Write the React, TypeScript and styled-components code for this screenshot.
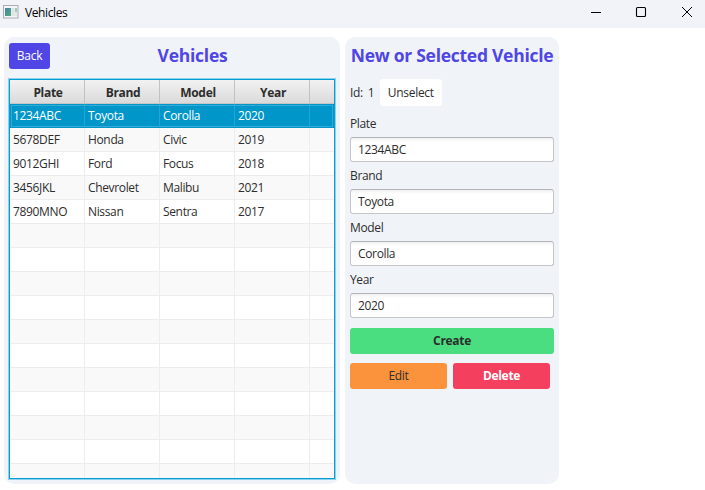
import React from "react";
import styled, { createGlobalStyle, css } from "styled-components";

const GlobalStyle = createGlobalStyle`
  * { box-sizing: border-box; }
  html, body { margin: 0; padding: 0; background: #fff; }
  body {
    font-family: "Open Sans", "Noto Sans", sans-serif;
    font-size: 12px;
    letter-spacing: -0.35px;
    color: #2d2d2d;
    overflow: hidden;
  }
  button, input { font: inherit; color: inherit; margin: 0; letter-spacing: inherit; }
`;

const Window = styled.div`
  width: 705px;
  height: 490px;
  display: flex;
  flex-direction: column;
`;

const TitleBar = styled.header`
  height: 28px;
  flex: none;
  display: flex;
  align-items: center;
  background: #f2f3f8;
  color: #000;
  padding: 0 3px;
`;

const AppIcon = styled.svg`
  display: block;
  margin-bottom: 4px;
`;

const WindowTitle = styled.span`
  flex: 1;
  margin-left: 6px;
  line-height: 16px;
  margin-bottom: 2px;
  letter-spacing: -0.4px;
`;

const Controls = styled.svg`
  display: block;
  margin-bottom: 4px;
`;

const Content = styled.main`
  height: 462px;
  display: flex;
  gap: 5px;
  padding: 9px 4px 6px;
`;

const Panel = styled.section<{ $width: number }>`
  width: ${(p) => p.$width}px;
  background: #f0f4f9;
  border-radius: 10px;
  padding: 5px;
  display: flex;
  flex-direction: column;
`;

const PanelHeader = styled.div`
  height: 28px;
  flex: none;
  display: flex;
  align-items: center;
`;

const Heading = styled.h1`
  flex: 1;
  margin: 0;
  font-size: 17.5px;
  line-height: 26px;
  padding-bottom: 2px;
  font-weight: 700;
  color: #4f46e5;
  text-align: center;
  white-space: nowrap;
  letter-spacing: -0.27px;
`;

const tones = {
  indigo: css`background: #4f46e5; color: #fff;`,
  plain: css`background: #fff;`,
  green: css`background: #4ade80; font-weight: 700;`,
  orange: css`background: #fb923c;`,
  rose: css`background: #f43f5e; color: #fff; font-weight: 700;`,
};

const Button = styled.button<{ $tone: keyof typeof tones; $width: number; $height?: number; $spacing?: number }>`
  border: 0;
  border-radius: 3px;
  padding: 0 0 1px;
  flex: none;
  width: ${(p) => p.$width}px;
  height: ${(p) => p.$height ?? 26}px;
  letter-spacing: ${(p) => p.$spacing ?? -0.3}px;
  ${(p) => tones[p.$tone]}
`;

const Table = styled.div`
  height: 400px;
  flex: none;
  margin-top: 9px;
  border: 1px solid #039ed3;
  box-shadow: 0 0 0 1px #8fd0ea;
  overflow: hidden;
  background: #fff;
`;

const columns = "75px 75px 75px 75px 1fr";

const HeadRow = styled.div`
  height: 24px;
  display: grid;
  grid-template-columns: ${columns};
  background: linear-gradient(#f2f2f2, #dadada);
  border-bottom: 1px solid #c6c6c6;
`;

const HeadCell = styled.div`
  font-weight: 700;
  line-height: 25px;
  text-align: center;
  padding-left: 2px;
  border-right: 1px solid #c2c2c2;
  letter-spacing: -0.3px;
  &:last-child { border-right: 0; }
`;

const Row = styled.div<{ $selected: boolean }>`
  position: relative;
  height: 24px;
  display: grid;
  grid-template-columns: ${columns};
  border-bottom: 1px solid #ededed;
  &:nth-child(odd) { background: #f9f9f9; }
  ${(p) =>
    p.$selected &&
    css`
      background: #0096c9;
      color: #fff;
      border-bottom-color: #0096c9;
      &::after {
        content: "";
        position: absolute;
        inset: 1px 1px 0;
        border: 1px solid #31abd4;
      }
    `}
`;

const Cell = styled.div<{ $selected: boolean }>`
  padding-left: 3px;
  line-height: 23px;
  white-space: nowrap;
  border-right: 1px solid ${(p) => (p.$selected ? "#22a5d1" : "#ededed")};
  &:last-child { border-right: 0; }
`;

const IdRow = styled.div`
  margin-top: 9px;
  height: 27px;
  display: flex;
  align-items: center;
  gap: 5px;
`;

const IdValue = styled.span`
  width: 7px;
`;

const Form = styled.div`
  margin-top: 10px;
  height: 212px;
`;

const Field = styled.label`
  display: block;
  height: 52px;
`;

const FieldLabel = styled.span`
  display: block;
  height: 21px;
  line-height: 16px;
`;

const Input = styled.input`
  display: block;
  width: 204px;
  height: 25px;
  border: 1px solid #c4c5c8;
  border-top-color: #b3b4b7;
  border-radius: 3px;
  background: linear-gradient(#f1f1f1, #fff 4px);
  padding: 0 7px;
  outline: none;
`;

const Actions = styled.div`
  display: flex;
  flex-wrap: wrap;
  gap: 9px 6px;
`;

const vehicles = [
  ["1234ABC", "Toyota", "Corolla", "2020"],
  ["5678DEF", "Honda", "Civic", "2019"],
  ["9012GHI", "Ford", "Focus", "2018"],
  ["3456JKL", "Chevrolet", "Malibu", "2021"],
  ["7890MNO", "Nissan", "Sentra", "2017"],
];

const rows = Array.from({ length: 16 }, (_, i) => vehicles[i] ?? ["", "", "", ""]);
const labels = ["Plate", "Brand", "Model", "Year"];

export default function App() {
  return (
    <Window>
      <GlobalStyle />
      <TitleBar>
        <AppIcon width="16" height="14" viewBox="0 0 16 14">
          <defs>
            <linearGradient id="pane" x1="0" y1="0" x2="1" y2="1">
              <stop offset="0" stopColor="#4b7fa8" />
              <stop offset="1" stopColor="#4fae7c" />
            </linearGradient>
          </defs>
          <rect x="0.5" y="0.5" width="14.5" height="12.5" fill="#f4f5f7" stroke="#a9adb5" />
          <rect x="2" y="3" width="6" height="8" fill="url(#pane)" />
          <rect x="8.5" y="3" width="3" height="8" fill="#dfe2e5" />
          <rect x="12" y="3" width="2" height="4" fill="#9fcdb5" />
          <rect x="12" y="7" width="2" height="4" fill="#e4e7ea" />
        </AppIcon>
        <WindowTitle>Vehicles</WindowTitle>
        <Controls width="115" height="14" viewBox="0 0 115 14" fill="none" stroke="#000">
          <path d="M4 7.5h10" />
          <rect x="49.5" y="2.5" width="9" height="9" rx="1" strokeWidth="1.1" />
          <path d="M95 2l10 10M105 2L95 12" />
        </Controls>
      </TitleBar>
      <Content>
        <Panel $width={336}>
          <PanelHeader>
            <Button $tone="indigo" $width={41}>Back</Button>
            <Heading>Vehicles</Heading>
          </PanelHeader>
          <Table>
            <HeadRow>
              {labels.map((l) => <HeadCell key={l}>{l}</HeadCell>)}
              <HeadCell />
            </HeadRow>
            {rows.map((cells, r) => (
              <Row key={r} $selected={r === 0}>
                {cells.map((c, i) => <Cell key={i} $selected={r === 0}>{c}</Cell>)}
                <Cell $selected={r === 0} />
              </Row>
            ))}
          </Table>
        </Panel>
        <Panel $width={214}>
          <PanelHeader>
            <Heading>New or Selected Vehicle</Heading>
          </PanelHeader>
          <IdRow>
            <span>Id:</span>
            <IdValue>1</IdValue>
            <Button $tone="plain" $width={62} $height={27}>Unselect</Button>
          </IdRow>
          <Form>
            {labels.map((l, i) => (
              <Field key={l}>
                <FieldLabel>{l}</FieldLabel>
                <Input defaultValue={vehicles[0][i]} />
              </Field>
            ))}
          </Form>
          <Actions>
            <Button $tone="green" $width={204}>Create</Button>
            <Button $tone="orange" $width={97}>Edit</Button>
            <Button $tone="rose" $width={97}>Delete</Button>
          </Actions>
        </Panel>
      </Content>
    </Window>
  );
}
